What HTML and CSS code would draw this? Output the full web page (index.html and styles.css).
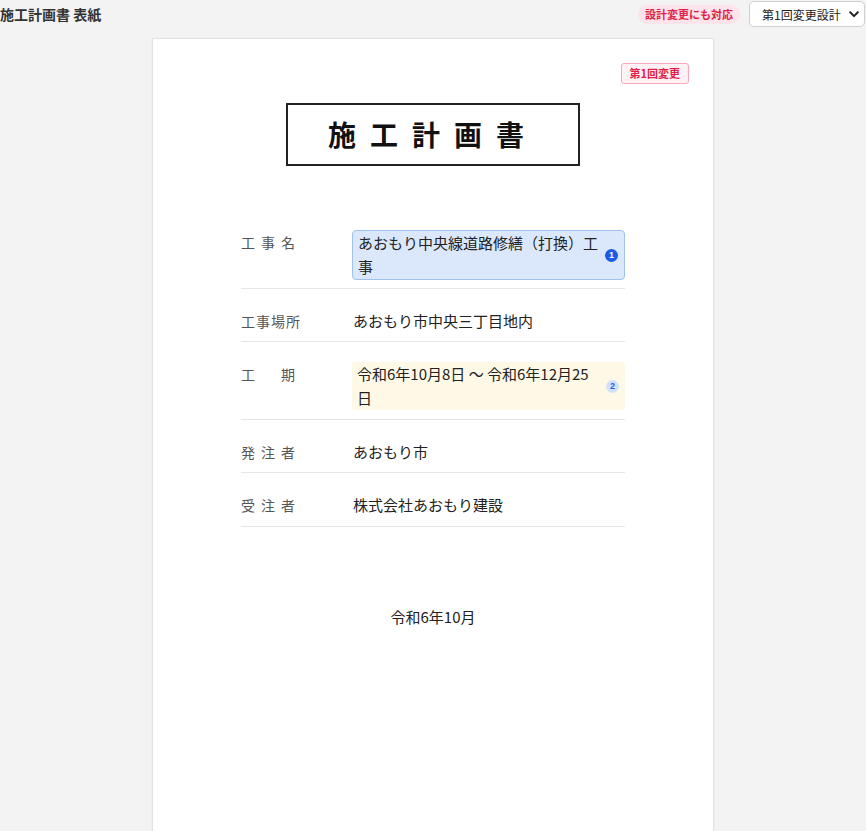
FILE: index.html
```html
<!DOCTYPE html>
<html lang="ja">
<head>
<meta charset="utf-8">
<title>施工計画書 表紙</title>
<link rel="stylesheet" href="styles.css">
</head>
<body>
<header class="topbar">
  <div class="doc-title">施工計画書 表紙</div>
  <div class="top-actions">
    <span class="pill">設計変更にも対応</span>
    <div class="select-wrap">
      <select class="version-select">
        <option>第1回変更設計</option>
        <option>当初設計</option>
      </select>
      <svg class="chevron" width="10" height="7" viewBox="0 0 10 7" aria-hidden="true">
        <path d="M1.2 1.3 L5 5.1 L8.8 1.3" fill="none" stroke="#222" stroke-width="2" stroke-linecap="round" stroke-linejoin="round"/>
      </svg>
    </div>
  </div>
</header>
<main class="sheet">
  <div class="badge-row"><span class="change-badge">第1回変更</span></div>
  <h1 class="cover-title">施工計画書</h1>
  <div class="info-table">
    <div class="info-row">
      <div class="label spaced">工事名</div>
      <div class="value box changed-blue">
        <span class="value-text">あおもり中央線道路修繕（打換）工事</span>
        <span class="num num-solid">1</span>
      </div>
    </div>
    <div class="info-row">
      <div class="label">工事場所</div>
      <div class="value plain">あおもり市中央三丁目地内</div>
    </div>
    <div class="info-row">
      <div class="label spaced">工　期</div>
      <div class="value box changed-yellow">
        <span class="value-text">令和6年10月8日 〜 令和6年12月25日</span>
        <span class="num num-soft">2</span>
      </div>
    </div>
    <div class="info-row">
      <div class="label spaced">発注者</div>
      <div class="value plain">あおもり市</div>
    </div>
    <div class="info-row">
      <div class="label spaced">受注者</div>
      <div class="value plain">株式会社あおもり建設</div>
    </div>
  </div>
  <p class="cover-date">令和6年10月</p>
</main>
</body>
</html>
```

FILE: styles.css
```css
* { box-sizing: border-box; }

html, body {
  margin: 0;
  padding: 0;
}

body {
  background: #f3f3f3;
  font-family: "Noto Sans CJK JP", "Noto Sans", sans-serif;
  color: #222;
}

.topbar {
  display: flex;
  align-items: center;
  justify-content: space-between;
  height: 28px;
  padding: 0 1px 0 0;
}

.doc-title {
  font-size: 14px;
  font-weight: 700;
  color: #333;
  line-height: 18px;
}

.top-actions {
  display: flex;
  align-items: center;
  gap: 9px;
}

.pill {
  font-size: 11px;
  font-weight: 700;
  color: #e11d48;
  background: #fde4ea;
  border-radius: 10px;
  padding: 2px 7px;
  line-height: 15px;
}

.select-wrap {
  position: relative;
  display: flex;
}

.version-select {
  appearance: none;
  -webkit-appearance: none;
  width: 116px;
  height: 26px;
  font-family: inherit;
  font-size: 12px;
  color: #222;
  background: #fff;
  border: 1px solid #cfcfcf;
  border-radius: 5px;
  padding: 0 18px 0 12px;
}

.chevron {
  position: absolute;
  right: 6px;
  top: 10px;
  pointer-events: none;
}

.sheet {
  width: 562px;
  min-height: 820px;
  margin: 10px auto 0;
  background: #fff;
  border: 1px solid #e2e2e2;
  box-shadow: 0 1px 3px rgba(0, 0, 0, 0.05);
  padding: 24px 24px;
}

.badge-row {
  display: flex;
  justify-content: flex-end;
}

.change-badge {
  font-size: 11px;
  font-weight: 700;
  color: #e11d48;
  background: #fff1f4;
  border: 1px solid #f7a9bb;
  border-radius: 3px;
  padding: 2px 8px;
  line-height: 15px;
}

.cover-title {
  width: fit-content;
  margin: 19px auto 0;
  border: 2px solid #222;
  padding: 9px 40px;
  font-size: 28px;
  font-weight: 700;
  letter-spacing: 14px;
  line-height: 41px;
  color: #111;
}

.info-table {
  width: 384px;
  margin: 44px auto 0;
}

.info-row {
  display: grid;
  grid-template-columns: 111px 1fr;
  padding: 20px 0 8.5px;
  border-bottom: 1px solid #e5e5e5;
}

.label {
  font-size: 14px;
  line-height: 24px;
  color: #555;
  letter-spacing: 1px;
}

.label.spaced {
  letter-spacing: 6px;
}

.value {
  font-size: 15px;
  line-height: 24px;
  color: #222;
}

.value.plain {
  padding-left: 1px;
}

.value.box {
  display: flex;
  align-items: center;
  gap: 6px;
  padding: 0 6px 0 5px;
  border-radius: 4px;
}

.value-text {
  flex: 1;
}

.changed-blue {
  background: #dbe8fc;
  border: 1px solid #9fc2ef;
  padding-left: 4px;
  margin-bottom: -1px;
}

.changed-yellow {
  background: #fef9e6;
}

.num {
  flex: none;
  width: 13px;
  height: 13px;
  border-radius: 50%;
  display: flex;
  align-items: center;
  justify-content: center;
  font-family: "Liberation Sans", Arial, sans-serif;
  font-size: 9px;
  font-weight: 700;
  line-height: 1;
}

.num-solid {
  background: #1a5ce6;
  color: #fff;
}

.num-soft {
  background: #d3e2fb;
  color: #2563eb;
}

.cover-date {
  margin: 78px 0 0;
  text-align: center;
  font-size: 15px;
  line-height: 24px;
  color: #222;
}
```
